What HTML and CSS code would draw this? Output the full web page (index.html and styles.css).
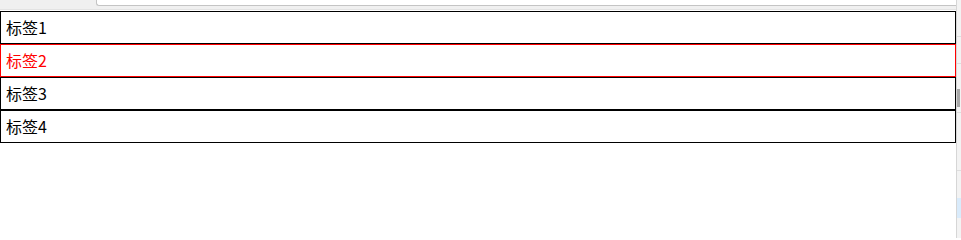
FILE: index.html
```html
<!DOCTYPE html>
<html lang="zh-CN">
<head>
<meta charset="utf-8">
<title>标签</title>
<link rel="stylesheet" href="styles.css">
</head>
<body>
<div class="page">
  <div class="main">
    <div class="toolbar">
      <div class="search"></div>
    </div>
    <ul class="tags">
      <li class="tag">标签1</li>
      <li class="tag tag-active">标签2</li>
      <li class="tag">标签3</li>
      <li class="tag">标签4</li>
    </ul>
  </div>
  <div class="side">
    <div class="side-row r1"></div>
    <div class="side-row r2"></div>
    <div class="side-thumb"></div>
    <div class="side-row r3"></div>
    <div class="side-row r4"></div>
    <div class="side-sel"></div>
  </div>
</div>
</body>
</html>
```

FILE: styles.css
```css
html, body {
  margin: 0;
  padding: 0;
  background: #ffffff;
}
body {
  font-family: "Noto Sans CJK SC", "Noto Sans", sans-serif;
  font-size: 16px;
  color: #000;
}
.page {
  display: flex;
  height: 238px;
  overflow: hidden;
}
.main {
  width: 956px;
  flex: none;
}
.toolbar {
  height: 9px;
  background: #f0f0f0;
  border-bottom: 1px solid #e3e3e3;
  margin-bottom: 1px;
  overflow: hidden;
}
.search {
  margin-left: 96px;
  height: 5px;
  background: #ffffff;
  border: 1px solid #c4c4c4;
  border-top: none;
  border-right: none;
  border-bottom-left-radius: 3px;
}
.tags {
  list-style: none;
  margin: 0;
  padding: 0;
}
.tag {
  box-sizing: border-box;
  height: 33px;
  line-height: 31px;
  border: 1px solid #000;
  padding: 0 5px;
  white-space: nowrap;
}
.tag-active {
  border-color: #ff0000;
  color: #ff0000;
}
.side {
  flex: 1;
  background: #f3f3f3;
  border-left: 1px solid #d6d6d6;
  display: flex;
  flex-direction: column;
}
.side-row {
  border-top: 1px solid #dedede;
}
.r1 { margin-top: 36px; }
.r2 { margin-top: 26px; }
.side-thumb {
  margin-top: 25px;
  height: 18px;
  width: 3px;
  background: #a8a8a8;
}
.r3 { margin-top: 5px; }
.r4 { margin-top: 57px; }
.side-sel {
  margin-top: 27px;
  height: 20px;
  background: #d9ebfb;
}
```
